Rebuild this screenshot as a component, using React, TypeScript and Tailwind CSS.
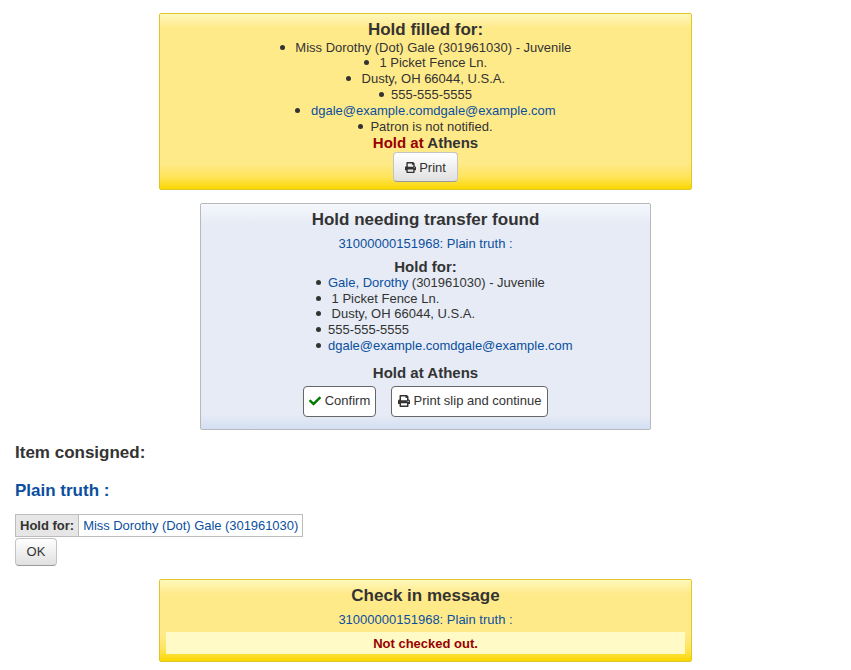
import { FaCheck, FaPrint } from 'react-icons/fa';

const alertBg = 'bg-[linear-gradient(to_bottom,#fff8bd_0px,#ffea8a_14px,#ffea8a_calc(100%-26px),#ffe45a_calc(100%-12px),#fad800_100%)]';
const messageBg = 'bg-[linear-gradient(to_bottom,#f4f7fb_0px,#f0f3f9_8px,#e6ebf5_20px,#e6ebf5_calc(100%-14px),#d3dff3_100%)]';
const linkClass = 'text-[#0b4f9e]';
const itemClass = "list-none before:content-[''] before:inline-block before:w-[5px] before:h-[5px] before:rounded-full before:bg-[#333333] before:mr-[7px] before:align-[2px]";

export default function App() {
  return (
    <div className="min-h-[670px] bg-white px-[15px] pt-[13px] text-[13px] leading-[15.8px] text-[#333333] font-['Liberation_Sans',Arial,sans-serif]">
      <div className={`mx-auto w-[533px] h-[177px] rounded-[2px] border border-[#e0c726] text-center pt-[6px] ${alertBg}`}>
        <h3 className="text-[17px] font-bold leading-[19px]">Hold filled for:</h3>
        <ul className="mt-[0.7px]">
          <li className={itemClass}>&nbsp;Miss Dorothy (Dot) Gale (301961030) - Juvenile</li>
          <li className={itemClass}>&nbsp;1 Picket Fence Ln.</li>
          <li className={itemClass}>&nbsp;Dusty, OH 66044, U.S.A.</li>
          <li className={itemClass}>555-555-5555</li>
          <li className={itemClass}>&nbsp;<span className={linkClass}>dgale@example.comdgale@example.com</span></li>
          <li className={itemClass}>Patron is not notified.</li>
        </ul>
        <h4 className="text-[15px] font-bold leading-[17px]">
          <span className="text-[#990000]">Hold at</span> Athens
        </h4>
        <button className="mt-[1px] h-[30px] w-[65px] inline-flex items-center justify-center gap-[3px] rounded-[4px] border border-[#c4c4c4] border-b-[#9a9a9a] bg-[linear-gradient(to_bottom,#ffffff,#e0e0e0)] text-[#333333]">
          <FaPrint className="w-[11px] h-[11px]" /> Print
        </button>
      </div>

      <div className={`mx-auto mt-[13px] w-[451px] h-[227px] rounded-[2px] border border-[#b9b9b9] text-center pt-[6px] ${messageBg}`}>
        <h3 className="text-[17px] font-bold leading-[19px]">Hold needing transfer found</h3>
        <p className={`mt-[7px] ${linkClass}`}>31000000151968: Plain truth :</p>
        <h4 className="mt-[7px] text-[15px] font-bold leading-[16px]">Hold for:</h4>
        <ul className="mt-[0.1px] pl-[115px] text-left">
          <li className={itemClass}><span className={linkClass}>Gale, Dorothy</span> (301961030) - Juvenile</li>
          <li className={itemClass}>&nbsp;1 Picket Fence Ln.</li>
          <li className={itemClass}>&nbsp;Dusty, OH 66044, U.S.A.</li>
          <li className={itemClass}>555-555-5555</li>
          <li className={itemClass}><span className={linkClass}>dgale@example.comdgale@example.com</span></li>
        </ul>
        <h4 className="mt-[10px] text-[15px] font-bold leading-[17px]">Hold at Athens</h4>
        <div className="mt-[5px] flex justify-center gap-[15px]">
          <button className="h-[31px] w-[73px] inline-flex items-center justify-center gap-[4px] rounded-[4px] border border-[#666666] bg-white">
            <FaCheck className="w-[12px] h-[12px] text-[#007a00]" /> Confirm
          </button>
          <button className="h-[31px] w-[157px] inline-flex items-center justify-center gap-[4px] rounded-[4px] border border-[#666666] bg-white">
            <FaPrint className="w-[12px] h-[12px]" /> Print slip and continue
          </button>
        </div>
      </div>

      <h3 className="mt-[13px] text-[17px] font-bold leading-[20px]">Item consigned:</h3>
      <h4 className={`mt-[18px] text-[17px] font-bold leading-[20px] ${linkClass}`}>Plain truth :</h4>

      <table className="mt-[13px] border-collapse">
        <tbody>
          <tr>
            <th className="h-[22px] border border-[#bcbcbc] bg-[#e6e6e6] px-[4px] font-bold">Hold for:</th>
            <td className={`h-[22px] border border-[#bcbcbc] px-[4px] tracking-[-0.05px] ${linkClass}`}>Miss Dorothy (Dot) Gale (301961030)</td>
          </tr>
        </tbody>
      </table>
      <button className="mt-[1px] block h-[28px] w-[42px] rounded-[4px] border border-[#c4c4c4] border-b-[#9a9a9a] bg-[linear-gradient(to_bottom,#ffffff,#e0e0e0)]">OK</button>

      <div className={`mx-auto mt-[13px] w-[533px] h-[83px] rounded-[2px] border border-[#e0c726] text-center pt-[6px] ${alertBg}`}>
        <h3 className="text-[17px] font-bold leading-[20px]">Check in message</h3>
        <p className={`mt-[6px] ${linkClass}`}>31000000151968: Plain truth :</p>
        <p className="mx-[6px] mt-[4px] h-[22px] bg-[#fffac6] font-bold text-[#990000] leading-[24px]">Not checked out.</p>
      </div>
    </div>
  );
}
